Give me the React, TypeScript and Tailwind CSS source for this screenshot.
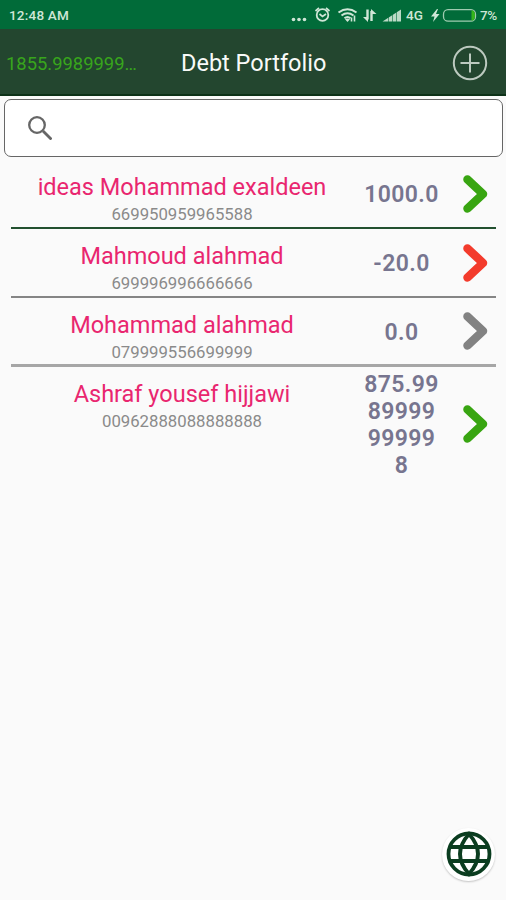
import { clsx } from "clsx";

type Debt = {
  name: string;
  phone: string;
  amount: string[]; // one entry per displayed line
  arrow: string;
  row: string;
};

const DEBTS: Debt[] = [
  {
    name: "ideas Mohammad exaldeen",
    phone: "669950959965588",
    amount: ["1000.0"],
    arrow: "text-[#38a511]",
    row: "h-[69px] border-b-2 border-[#22502f]",
  },
  {
    name: "Mahmoud alahmad",
    phone: "699996996666666",
    amount: ["-20.0"],
    arrow: "text-[#f33b2c]",
    row: "h-[69px] border-b-2 border-[#858585]",
  },
  {
    name: "Mohammad alahmad",
    phone: "079999556699999",
    amount: ["0.0"],
    arrow: "text-[#828282]",
    row: "h-[69px] border-b-[3px] border-[#a6a6a6]",
  },
  {
    name: "Ashraf yousef hijjawi",
    phone: "00962888088888888",
    amount: ["875.99", "89999", "99999", "8"],
    arrow: "text-[#38a511]",
    row: "h-[113px]",
  },
];

function StatusBar() {
  return (
    <div className="flex h-[29px] items-center bg-[#016b39] pt-0.5 pl-[9px] text-[13.500px] font-medium text-[#cfe6d6]">
      <span className="w-[282px] tracking-[0.2px]">12:48 AM</span>
      <svg className="h-5 w-[111px] shrink-0" viewBox="291 5 111 20" fill="none" stroke="currentColor">
        <g fill="currentColor" stroke="none">
          <circle cx="293.5" cy="18.5" r="1.8" />
          <circle cx="299" cy="18.5" r="1.8" />
          <circle cx="304.5" cy="18.5" r="1.8" />
        </g>
        <circle cx="322.5" cy="14" r="5.8" strokeWidth="1.8" />
        <path d="M319.5 13l3 2.5 3.5-2.5M315.5 10l3.5-3M329.5 10L326 7" strokeWidth="1.7" />
        <path d="M338.5 11.500q9-6.500 18 0M341.500 14.500q6-4.500 12 0M344.500 17.300q3-2.500 6 0" strokeWidth="2" />
        <path d="M347.500 21l-2.500-2.800q2.500-1.500 5 0z" fill="currentColor" stroke="none" />
        <path d="M351.500 20.500v-4M354.500 20.500v-6" strokeWidth="1.600" />
        <path d="M367.500 8.500v10M371.500 20v-10" strokeWidth="2.400" />
        <path d="M363 16h5v5zM371 8v5h5.500z" fill="currentColor" stroke="none" />
        <path d="M382.500 20.500l18.500-12v12z" fill="currentColor" stroke="none" opacity=".9" />
        <path d="M388.500 14v7M392.500 11v10M396.500 9v12" stroke="#016b39" strokeWidth=".6" />
      </svg>
      <span className="ml-1 w-[19px]">4G</span>
      <svg className="ml-[6px] h-5 w-[46px] shrink-0" viewBox="431 5 46 20">
        <path d="M437 8l-6 7.500h3.500l-1.500 5.500 6.500-8h-3.500l2-5z" fill="currentColor" />
        <rect x="443.500" y="8.700" width="32" height="11.500" rx="4.500" fill="none" stroke="#9fcbb0" strokeWidth="1.300" />
        <path d="M471.500 9.500h1.500q2 1 2 5t-2 5h-1.500z" fill="#35b51b" />
      </svg>
      <span className="ml-[3px] tracking-[-0.5px]">7%</span>
    </div>
  );
}

function Header() {
  return (
    <header className="flex h-[67px] items-center border-b-2 border-[#0d3218] bg-[#23462f] pl-[6px]">
      <span className="w-[175px] pt-[5px] text-[18.400px] text-[#38a51c]">1855.9989999…</span>
      <h1 className="w-[271px] pt-1 text-[23.500px] font-normal text-[#f8faf8]">Debt Portfolio</h1>
      <svg className="mt-[2px] h-9 w-9" viewBox="0 0 36 36" fill="none" stroke="#bdcac0">
        <circle cx="18" cy="18" r="16.200" strokeWidth="2" />
        <path d="M18 8.500v19M8.500 18h19" strokeWidth="2" />
      </svg>
    </header>
  );
}

function DebtRow({ debt }: { debt: Debt }) {
  return (
    <li className={clsx("flex", debt.row)}>
      <div className="flex w-[342px] flex-col items-center pt-[13px]">
        <span className="text-[23.500px] leading-[28px] font-normal text-[#e9266f]">{debt.name}</span>
        <span className="text-[16.750px] leading-[26px] text-[#8a8a8a]">{debt.phone}</span>
      </div>
      <div className="flex w-[97px] flex-col items-center justify-center pt-[2px] text-[23px] leading-[27px] font-semibold tracking-[0.4px] text-[#77758f]">
        {debt.amount.map((line, i) => (
          <span key={i}>{line}</span>
        ))}
      </div>
      <div className="flex flex-1 items-center pl-[13px]">
        <svg
          className={clsx("h-[38px] w-[25px]", debt.arrow)}
          viewBox="0 0 25 38"
          fill="none"
          stroke="currentColor"
          strokeWidth="8.500"
          strokeLinecap="round"
          strokeLinejoin="round"
        >
          <path d="M4.500 4.500L20 19 4.500 33.500" />
        </svg>
      </div>
    </li>
  );
}

export default function App() {
  return (
    <div className="relative h-[900px] w-[506px] overflow-hidden bg-[#fafafa] font-[Roboto,sans-serif]">
      <StatusBar />
      <Header />
      <div className="mr-[3px] ml-1 mt-[3px] flex h-[58px] items-center rounded-[7px] border-[1.5px] border-[#666] bg-white pl-[23px]">
        <svg className="h-6 w-6" viewBox="0 0 24 24" fill="none" stroke="#666" strokeWidth="2.300">
          <circle cx="9" cy="9" r="7.800" />
          <path d="M15 15l8.500 8.500" strokeWidth="2.800" />
        </svg>
      </div>
      <ul className="mt-[3px] pr-[10px] pl-[11px]">
        {DEBTS.map((d) => (
          <DebtRow key={d.phone} debt={d} />
        ))}
      </ul>
      <button
        type="button"
        aria-label="Language"
        className="absolute top-[828px] left-[442px] flex h-[53px] w-[53px] items-center justify-center rounded-full bg-white pb-[2px] shadow-[0_1px_2px_rgba(0,0,0,0.22)]"
      >
        <svg className="h-[46px] w-[46px]" viewBox="0 0 46 46" fill="none" stroke="#0b3d20" strokeWidth="3.800">
          <circle cx="23" cy="23" r="20.500" />
          <path d="M23 3Q5 23 23 43Q41 23 23 3zM3 16h40M3 30h40" />
        </svg>
      </button>
    </div>
  );
}
